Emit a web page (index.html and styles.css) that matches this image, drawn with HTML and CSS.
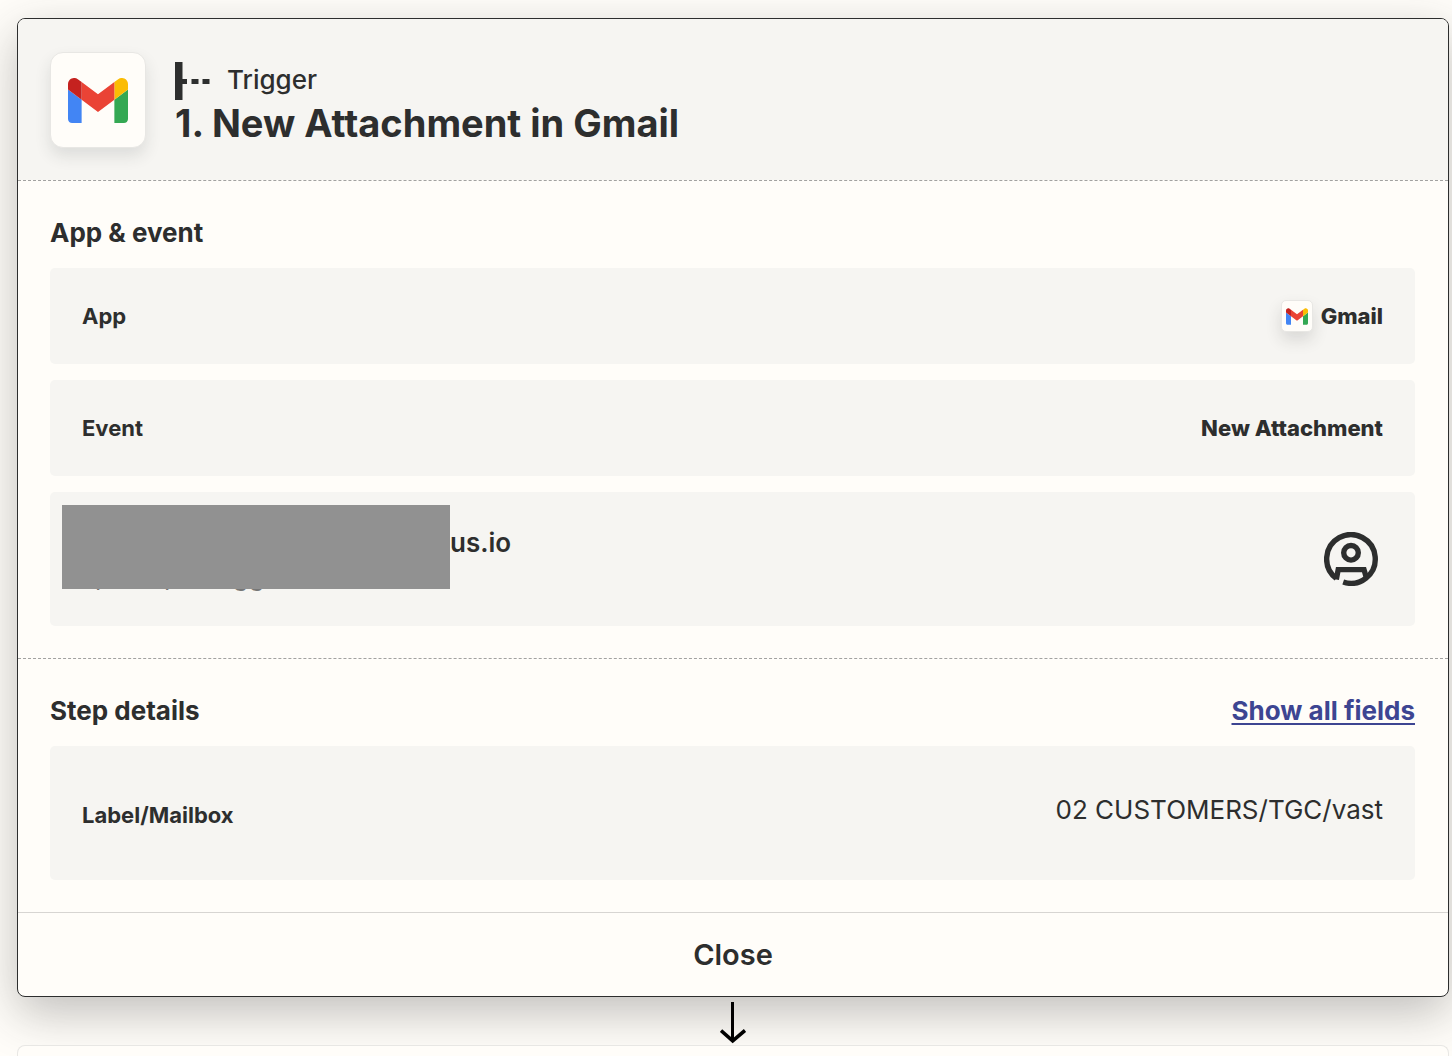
FILE: index.html
```html
<!DOCTYPE html>
<html lang="en">
<head>
  <meta charset="UTF-8">
  <meta name="viewport" content="width=device-width, initial-scale=1.0">
  <title>New Attachment in Gmail</title>
  <link rel="stylesheet" href="styles.css">
</head>
<body>
  <svg class="defs" width="0" height="0" aria-hidden="true">
    <symbol id="gmail" viewBox="52 42 88 66">
      <path fill="#4285f4" d="M58 108h14V74L52 59v43c0 3.320 2.690 6 6 6"/>
      <path fill="#34a853" d="M120 108h14c3.320 0 6-2.690 6-6V59l-20 15"/>
      <path fill="#fbbc04" d="M120 48v26l20-15v-8c0-7.420-8.470-11.650-14.400-7.200"/>
      <path fill="#ea4335" d="M72 74V48l24 18 24-18v26L96 92"/>
      <path fill="#c5221f" d="M52 51v8l20 15V48l-5.600-4.200c-5.940-4.450-14.400-.22-14.400 7.200"/>
    </symbol>
  </svg>

  <main class="step">
    <header class="step-header">
      <span class="app-icon large">
        <svg aria-hidden="true"><use href="#gmail"/></svg>
      </span>
      <div class="step-title">
        <div class="step-type">
          <svg class="trigger-icon" viewBox="0 0 36 40" aria-hidden="true">
            <path fill="#2d2e2e" d="M0 2h7.500v17H12v5H7.500v16H0zM16.500 19h7v5h-7zM27.500 19h7v5h-7z"/>
          </svg>
          <span>Trigger</span>
        </div>
        <h1>1. New Attachment in Gmail</h1>
      </div>
    </header>

    <section class="section">
      <div class="section-head">
        <h2>App &amp; event</h2>
      </div>
      <div class="rows">
        <div class="row">
          <span class="label">App</span>
          <span class="value">
            <span class="app-icon small">
              <svg aria-hidden="true"><use href="#gmail"/></svg>
            </span>
            Gmail
          </span>
        </div>
        <div class="row">
          <span class="label">Event</span>
          <span class="value">New Attachment</span>
        </div>
        <div class="row account">
          <div class="redacted"></div>
          <span class="email">us.io</span>
          <div class="account-note" aria-hidden="true">
            <span>p</span><span>p</span><span>gg</span>
          </div>
          <svg class="user-icon" viewBox="0 0 54 54" fill="none" stroke="#2d2e2e" stroke-width="5.400" aria-hidden="true">
            <path d="M12.300 46.350A24.300 24.300 0 1 1 19.200 50"/>
            <circle cx="27" cy="20.800" r="7.300"/>
            <path d="M12.300 47.500 14.200 37.600H40L42 44.500"/>
          </svg>
        </div>
      </div>
    </section>

    <section class="section">
      <div class="section-head">
        <h2>Step details</h2>
        <a href="#">Show all fields</a>
      </div>
      <div class="rows">
        <div class="row tall">
          <span class="label">Label/Mailbox</span>
          <span class="field-value">02 CUSTOMERS/TGC/vast</span>
        </div>
      </div>
    </section>

    <button class="close" type="button">Close</button>
  </main>

  <div class="connector">
    <svg viewBox="0 0 26 42" fill="none" stroke="#000" stroke-width="3" aria-hidden="true">
      <path d="M12.500 0v39"/>
      <path stroke-width="3.600" d="M1 28.500 12.700 38.800 25 28.500"/>
    </svg>
  </div>
  <div class="next-step"></div>
</body>
</html>
```
FILE: styles.css
```css
* {
  box-sizing: border-box;
}
body {
  display: flex;
  flex-direction: column;
  margin: 0;
  padding: 18px 3px 0 17px;
  min-height: 100vh;
  background: #fffdf9;
  color: #2d2e2e;
  font-family: Inter, "Liberation Sans", sans-serif;
}
h1, h2 {
  margin: 0;
  font-weight: 700;
}
.defs {
  position: absolute;
}
.step {
  border: 1px solid #2d2e2e;
  border-radius: 8px;
  background: #fffdf9;
  box-shadow: 0 16px 48px rgba(45, 46, 46, 0.3);
  overflow: hidden;
}
.step-header {
  display: flex;
  align-items: center;
  gap: 29px;
  padding: 33px 32px 32px;
  background: #f6f5f2;
}
.app-icon {
  display: flex;
  align-items: center;
  justify-content: center;
  border: 1px solid #e8e7e4;
  background: #fffdf9;
}
.app-icon.large {
  width: 96px;
  height: 96px;
  border-radius: 13px;
  box-shadow: 0 8px 16px rgba(45, 46, 46, 0.12);
}
.app-icon.large svg {
  width: 60px;
  height: 45px;
}
.app-icon.small {
  width: 32px;
  height: 32px;
  border-radius: 5px;
  box-shadow: 0 8px 16px rgba(45, 46, 46, 0.14);
}
.app-icon.small svg {
  width: 22px;
  height: 17px;
}
.step-title {
  padding-top: 6px;
}
.step-type {
  display: flex;
  align-items: center;
  gap: 16px;
  font-size: 26px;
  font-weight: 500;
  line-height: 38px;
}
.trigger-icon {
  width: 36px;
  height: 40px;
}
h1 {
  font-size: 38px;
  line-height: 46px;
}
.section {
  padding: 32px 33px 32px 32px;
  border-top: 1px dashed #a2a2a0;
}
.section-head {
  display: flex;
  justify-content: space-between;
  margin-bottom: 16px;
  font-size: 26px;
  line-height: 39px;
}
.section-head h2 {
  font-size: 26px;
}
.section-head a {
  color: #3d4592;
  font-weight: 700;
  text-decoration-thickness: 2px;
  text-underline-offset: 3px;
  text-decoration-skip-ink: none;
}
.rows {
  display: flex;
  flex-direction: column;
  gap: 16px;
}
.row {
  display: flex;
  align-items: center;
  justify-content: space-between;
  min-height: 96px;
  padding: 0 32px;
  border-radius: 5px;
  background: #f6f5f2;
  font-size: 22px;
  line-height: 32px;
}
.label {
  font-weight: 700;
}
.value {
  display: flex;
  align-items: center;
  gap: 8px;
  font-weight: 800;
}
.row.account {
  position: relative;
  align-items: flex-start;
  justify-content: flex-start;
  min-height: 134px;
  padding: 13px 37px 13px 12px;
}
.redacted {
  z-index: 1;
  width: 388px;
  height: 84px;
  background: #919191;
}
.email {
  padding-top: 18px;
  font-size: 26px;
  font-weight: 600;
  line-height: 40px;
}
.account-note {
  position: absolute;
  top: 68px;
  left: 45px;
  display: flex;
  gap: 53px;
  color: #777;
  font-size: 26px;
}
.user-icon {
  width: 54px;
  height: 54px;
  margin-left: auto;
  align-self: center;
}
.row.tall {
  min-height: 134px;
  padding-top: 3px;
}
.field-value {
  padding-bottom: 10px;
  font-size: 26px;
}
.close {
  display: block;
  width: 100%;
  padding: 0;
  border: 0;
  border-top: 1px solid #d7d5d2;
  background: none;
  color: inherit;
  font: inherit;
  font-size: 29px;
  font-weight: 600;
  line-height: 83px;
  cursor: pointer;
}
.connector {
  display: flex;
  justify-content: center;
  padding: 5px 0 1px;
  position: relative;
}
.connector svg {
  width: 26px;
  height: 42px;
}
.next-step {
  flex: 1;
  border: 1px solid #e8e7e4;
  border-bottom: 0;
  border-radius: 8px 8px 0 0;
  background: #fffdf9;
  position: relative;
}
```
